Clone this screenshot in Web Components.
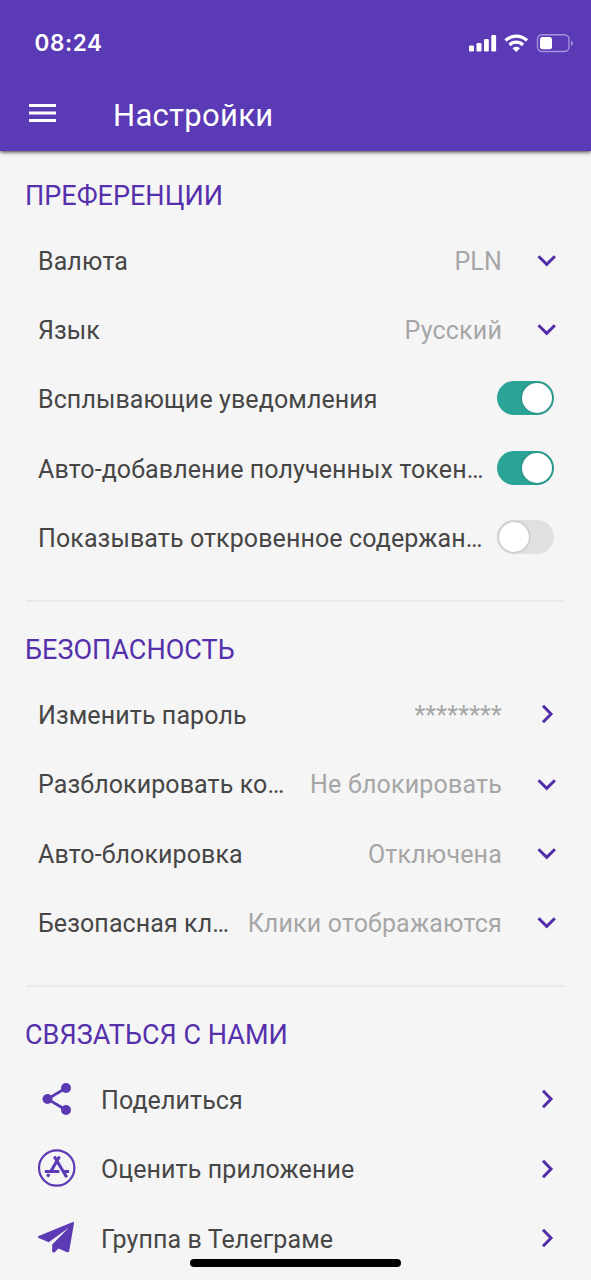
<!DOCTYPE html>
<html lang="ru">
<head>
<meta charset="utf-8">
<title>Настройки</title>
<style>
html,body{margin:0;height:100%;overflow:hidden;background:#f5f5f5}
body{font-family:Roboto,"Noto Sans",sans-serif;color:#464646}
</style>
</head>
<body>
<settings-app>
  <status-bar slot="top" time="08:24"></status-bar>
  <app-header slot="top">Настройки</app-header>
  <settings-section heading="ПРЕФЕРЕНЦИИ">
    <settings-row kind="down" value="PLN">Валюта</settings-row>
    <settings-row kind="down" value="Русский">Язык</settings-row>
    <settings-row kind="on">Всплывающие уведомления</settings-row>
    <settings-row kind="on">Авто-добавление полученных токен…</settings-row>
    <settings-row kind="off">Показывать откровенное содержан…</settings-row>
  </settings-section>
  <settings-section heading="БЕЗОПАСНОСТЬ">
    <settings-row kind="right" value="********">Изменить пароль</settings-row>
    <settings-row kind="down" value="Не блокировать">Разблокировать ко…</settings-row>
    <settings-row kind="down" value="Отключена">Авто-блокировка</settings-row>
    <settings-row kind="down" value="Клики отображаются">Безопасная кл…</settings-row>
  </settings-section>
  <settings-section heading="СВЯЗАТЬСЯ С НАМИ">
    <settings-row kind="right" icon="share">Поделиться</settings-row>
    <settings-row kind="right" icon="store">Оценить приложение</settings-row>
    <settings-row kind="right" icon="plane">Группа в Телеграме</settings-row>
  </settings-section>
</settings-app>
<script>
const define = (name, render) => customElements.define(name, class extends HTMLElement {
  connectedCallback() {
    if (!this.shadowRoot) this.attachShadow({ mode: 'open' }).innerHTML = render(this);
  }
});

define('settings-app', () => `
<style>
:host{display:flex;flex-direction:column;height:1280px;width:591px;overflow:hidden;position:relative;background:#f5f5f5}
header{flex:none;height:151px;background:#5b3ab5;box-shadow:0 1px 4px rgba(0,0,0,.8);position:relative}
main{flex:1;min-height:0;overflow:hidden}
.home{position:absolute;left:190px;bottom:13px;width:211px;height:8px;border-radius:4px;background:#000}
</style>
<header><slot name="top"></slot></header>
<main><slot></slot></main>
<div class="home"></div>`);

define('status-bar', el => `
<style>
:host{display:flex;height:86px;align-items:center;box-sizing:border-box;padding:0 17px 0 34.5px;color:#fff}
time{flex:1;font:600 22.5px/28px Inter,sans-serif;letter-spacing:.6px}
svg{display:block}
</style>
<time>${el.getAttribute('time')}</time>
<svg width="106" height="20" viewBox="468 33 106 20" fill="#fff">
<rect x="469" y="45.5" width="5" height="6" rx="1.2"/><rect x="476.5" y="43" width="5" height="8.500" rx="1.2"/><rect x="484" y="39" width="4.800" height="12.500" rx="1.2"/><rect x="491.300" y="35" width="4.800" height="16.500" rx="1.2"/>
<g fill="none" stroke="#fff" stroke-width="3.200"><path d="M505.500 40.500a15.500 15.500 0 0 1 21.500 0"/><path d="M509.500 45a9.500 9.500 0 0 1 13.500 0"/></g>
<path d="M512.500 48.200q3.750-2.800 7.500 0L516.250 52z"/>
<rect x="537.500" y="34.800" width="31.500" height="16.700" rx="4.500" fill="none" stroke="#a791dc" stroke-width="1.400"/>
<rect x="540" y="37" width="12" height="12.300" rx="2.500"/>
<path d="M571 40.500q2 1 2 2.800t-2 2.800z" fill="#a791dc"/>
</svg>`);

define('app-header', () => `
<style>
:host{display:flex;align-items:center;height:58px;padding-left:29px;gap:57px;color:#fff;font-size:31px;line-height:40px;letter-spacing:.3px}
svg{display:block;flex:none}
span{padding-top:1px}
</style>
<svg width="27" height="20" viewBox="0 0 27 20" style="margin-top:-4px"><path d="M0 2.500h27M0 10h27M0 17.500h27" stroke="#fff" stroke-width="2.800"/></svg>
<span><slot></slot></span>`);

define('settings-section', el => `
<style>
:host{display:block;padding:24.500px 26px 0 25px}
:host(:not(:first-of-type)){padding-top:0}
h2{margin:0;height:40px;line-height:40px;font-size:27px;font-weight:400;color:#5530ac;letter-spacing:.02px;white-space:nowrap}
.rows{padding:10.500px 6px 27px 13px}
hr{margin:0 0 28.200px 1px;border:0;height:2px;background:#e9e9e9}
:host(:last-of-type) hr{display:none}
</style>
<h2>${el.getAttribute('heading')}</h2>
<div class="rows"><slot></slot></div>
<hr>`);

const icons = {
  share: '<g fill="#5b3ab3"><circle cx="9.500" cy="19" r="5"/><circle cx="28" cy="8" r="5"/><circle cx="28" cy="30" r="5"/></g><path d="M28 8L9.500 19L28 30" fill="none" stroke="#5b3ab3" stroke-width="2.700"/>',
  store: '<g fill="none" stroke="#5b3ab3"><circle cx="18.700" cy="19" r="17.700" stroke-width="2.200"/><g stroke-width="3.100"><path d="M16.300 7.500L28.700 28.300M21.500 7.500L12.800 22.500M11 25l-1.500 2.700"/><path d="M6.800 22.500h14.500M25.300 22.500h5.800"/></g></g>',
  plane: '<path d="M35.500 3.800Q36.500 3.700 36.300 5L31.500 32.800Q31.200 34.500 29.500 34L20.800 30.200L17 34Q14.500 35 14.500 33V26.200L31 9.500L11 24L1 19.700Q-.5 18.500 1 17.700L34 4.200z" transform="translate(-.3 -.8)" fill="#5b3ab3"/>'
};

define('settings-row', el => {
  const kind = el.getAttribute('kind'), icon = el.getAttribute('icon'), value = el.getAttribute('value');
  const toggle = kind === 'on' || kind === 'off';
  const end = toggle ? `<i class="${kind}"></i>` :
    `<svg class="chevron" width="24" height="24" viewBox="0 0 24 24"><path d="${kind === 'down' ? 'M3.500 8.300L11.700 16.300L19.900 8.300' : 'M8 3.800L16 12L8 20.200'}" fill="none" stroke="#512da8" stroke-width="3"/></svg>`;
  return `
<style>
:host{display:flex;align-items:center;height:69.330px;font-size:25px;line-height:34px;letter-spacing:.1px;white-space:nowrap}
.icon{flex:none;margin:-2px 25px 0 0}
.label{flex:1 1 0;min-width:0;padding-top:2px}
.value{flex:none;color:#a6a6a6;padding-top:2px;letter-spacing:.18px}
.chevron{flex:none;margin:-1px 0 0 33px}
i{flex:none;box-sizing:border-box;width:57px;height:34px;border-radius:17px;margin:-2px 5px 0 12px;padding:2px 2px;display:flex}
i::before{content:"";width:30px;height:30px;border-radius:50%;background:#fff;box-shadow:0 0 3px rgba(0,0,0,.3)}
.on{background:#2ba497;justify-content:flex-end}
.off{background:#e0e0e0}
</style>
${icon ? `<svg class="icon" width="38" height="38" viewBox="0 0 38 38">${icons[icon]}</svg>` : ''}
<span class="label"><slot></slot></span>
${value ? `<span class="value">${value}</span>` : ''}
${end}`;
});
</script>
</body>
</html>
